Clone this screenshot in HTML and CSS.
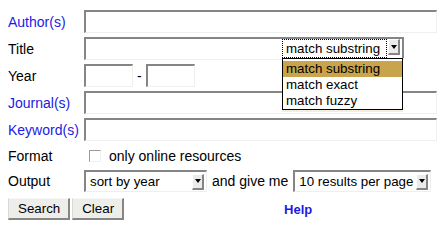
FILE: index.html
```html
<!DOCTYPE html>
<html>
<head>
<meta charset="utf-8">
<link rel="stylesheet" href="styles.css">
</head>
<body>
<form class="form">
  <div class="row">
    <span class="lbl link">Author(s)</span>
    <input type="text" class="txt full">
  </div>
  <div class="row">
    <span class="lbl">Title</span>
    <div class="title-wrap">
      <input type="text" class="txt title">
      <div class="combo">
        <span class="combo-val">match substring</span>
        <span class="sel-btn"><span class="tri"></span></span>
      </div>
      <ul class="combo-list">
        <li class="opt active">match substring</li>
        <li class="opt">match exact</li>
        <li class="opt">match fuzzy</li>
      </ul>
    </div>
  </div>
  <div class="row">
    <span class="lbl">Year</span>
    <input type="text" class="txt year">
    <span class="dash">-</span>
    <input type="text" class="txt year">
  </div>
  <div class="row">
    <span class="lbl link">Journal(s)</span>
    <input type="text" class="txt full">
  </div>
  <div class="row">
    <span class="lbl link">Keyword(s)</span>
    <input type="text" class="txt full">
  </div>
  <div class="row row-format">
    <span class="lbl">Format</span>
    <span class="check"></span>
    <span class="check-text">only online resources</span>
  </div>
  <div class="row row-output">
    <span class="lbl">Output</span>
    <div class="sel sel-sort">
      <span class="sel-val">sort by year</span>
      <span class="sel-btn"><span class="tri"></span></span>
    </div>
    <span class="between">and give me</span>
    <div class="sel sel-count">
      <span class="sel-val">10 results per page</span>
      <span class="sel-btn"><span class="tri"></span></span>
    </div>
  </div>
  <div class="row row-buttons">
    <button type="button" class="btn">Search</button>
    <button type="button" class="btn">Clear</button>
    <a class="help" href="#">Help</a>
  </div>
</form>
</body>
</html>
```

FILE: styles.css
```css
* { box-sizing: border-box; }

body {
  margin: 0;
  padding: 10px 8px 0;
  background: #fff;
  color: #000;
  font-family: "Liberation Sans", Arial, sans-serif;
  font-size: 14px;
}

.form {
  display: flex;
  flex-direction: column;
  gap: 4px;
}

.row {
  display: flex;
  align-items: center;
  height: 23px;
}

.lbl {
  width: 76px;
  flex: none;
}

.link { color: #1a1ae8; }

.txt {
  height: 23px;
  margin: 0;
  padding: 0 3px;
  background: #fff;
  border-style: solid;
  border-width: 2px 1px 1px 2px;
  border-color: #858585 #efefef #efefef #858585;
  font: inherit;
  outline: none;
}

.full { width: 353px; }
.title { width: 320px; }
.year { width: 49px; }

.dash { margin: 0 4px; }

.title-wrap {
  position: relative;
  width: 320px;
  height: 23px;
}

.combo {
  position: absolute;
  top: 0;
  right: 0;
  width: 122px;
  height: 21px;
  display: flex;
  align-items: flex-start;
  padding-right: 2px;
  background: #fff;
  border-top: 2px solid #858585;
  border-right: 2px solid #858585;
  font-size: 13.333px;
}

.combo-val {
  flex: 1;
  height: 19px;
  margin-right: 1px;
  padding-left: 3px;
  line-height: 17px;
  border: 1px dotted #000;
  white-space: nowrap;
}

.sel-btn {
  flex: none;
  width: 12px;
  height: 16px;
  display: flex;
  align-items: center;
  justify-content: center;
  background: #ebebeb;
  border-style: solid;
  border-width: 1px 2px 2px 1px;
  border-color: #fff #858585 #858585 #fff;
}

.tri {
  width: 0;
  height: 0;
  border-left: 3px solid transparent;
  border-right: 3px solid transparent;
  border-top: 4px solid #000;
}

.combo-list {
  position: absolute;
  top: 21px;
  left: 198px;
  width: 121px;
  margin: 0;
  padding: 2px 0 0;
  list-style: none;
  background: #fff;
  border: 1px solid #000;
  box-shadow: 0 2px 0 #f4eedc;
  font-size: 13.333px;
  z-index: 2;
}

.opt {
  height: 16px;
  line-height: 16px;
  padding-left: 3px;
  white-space: nowrap;
}

.opt.active { background: #c8a54c; }

.row-format { height: 21px; }

.check {
  width: 12px;
  height: 12px;
  margin-left: 5px;
  background: #fff;
  border-style: solid;
  border-width: 1px;
  border-color: #9a9a9a #f0f0f0 #f0f0f0 #9a9a9a;
}

.check-text { margin-left: 8px; }

.row-output { height: 22px; }

.sel {
  height: 22px;
  display: flex;
  align-items: center;
  padding-right: 2px;
  background: #fff;
  border-style: solid;
  border-width: 2px 1px 1px 2px;
  border-color: #858585 #efefef #efefef #858585;
  font-size: 13.333px;
}

.sel-val {
  flex: 1;
  padding-left: 4px;
  white-space: nowrap;
}

.sel-sort { width: 123px; }
.sel-count { width: 138px; }

.between { margin: 0 5px; }

.row-buttons {
  height: 22px;
  margin-top: 2px;
  gap: 2px;
}

.btn {
  height: 22px;
  margin: 0;
  padding: 0 8px 0 9px;
  background: #ededea;
  color: #000;
  border-style: solid;
  border-width: 1px 2px 2px 1px;
  border-color: #f8f8f8 #858585 #858585 #d8d8d8;
  font-family: "Liberation Sans", Arial, sans-serif;
  font-size: 13.333px;
}

.help {
  margin-left: 158px;
  color: #1a1ae8;
  font-weight: bold;
  font-size: 13px;
  text-decoration: none;
}
```
